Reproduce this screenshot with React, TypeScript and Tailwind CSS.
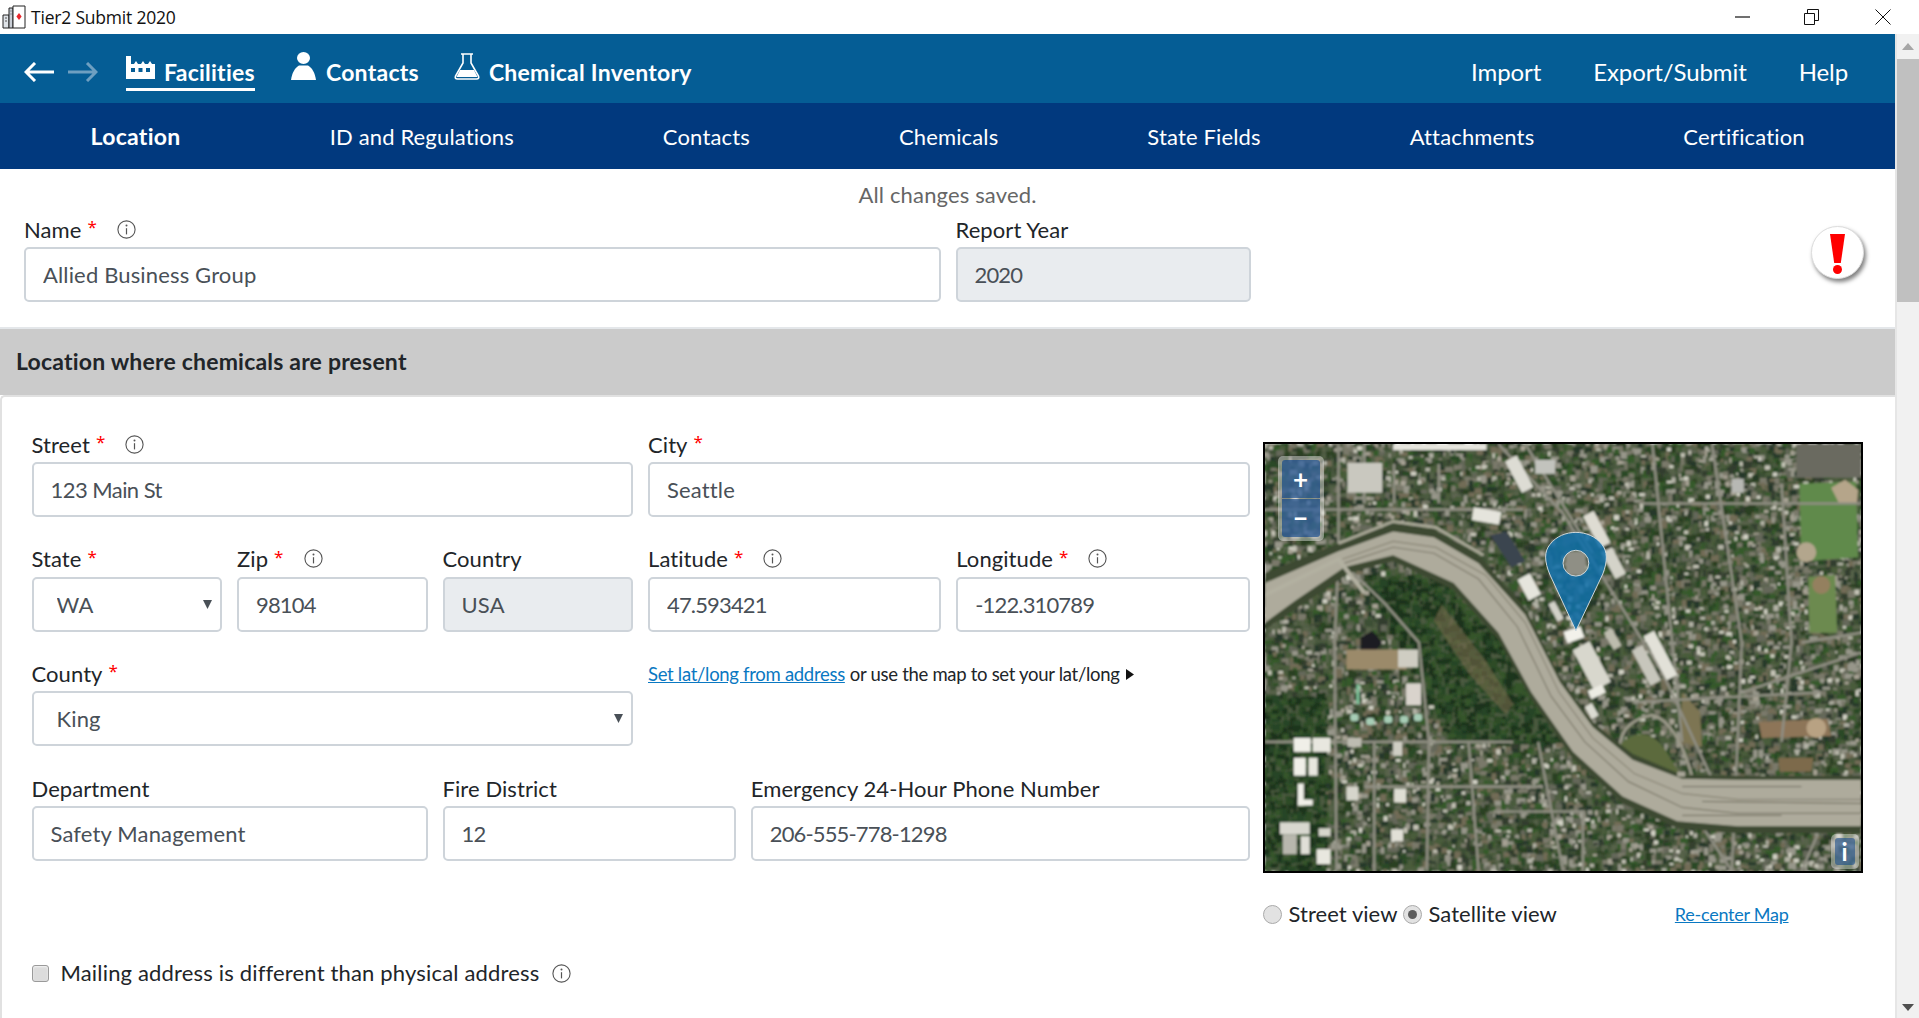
import type { ReactNode } from "react";

// tiny seeded random so the map looks the same on every render
function makeRandom(seed: number) {
  let s = seed;
  return () => {
    s = (s * 1664525 + 1013904223) % 4294967296;
    return s / 4294967296;
  };
}

type Lot = { x: number; y: number; w: number; h: number; c: string };

const rnd = makeRandom(42);
const hoodColors = ["#2c4a25", "#365a2c", "#28392a", "#65685a", "#7a796a", "#726c56", "#4a5c3a", "#97968a", "#333c2e", "#566249", "#3e5034", "#2b3f23"];
const forestColors = ["#1f361d", "#264427", "#1c321b", "#2d4c28", "#35552c"];
const roofColors = ["#c4c3b6", "#b3b2a6", "#d2d1c5", "#a7a294"];

const lots: Lot[] = [];
for (let y = -4; y < 430; y += 5) {
  for (let x = -4; x < 600; x += 5) {
    const inForestA = x - y * 0.55 > 20 && x - y * 0.9 < 60 && y > 130 && y < 300 && x > 100;
    const inForestB = x < 60 && y > 250;
    const pick = inForestA || inForestB ? forestColors : hoodColors;
    const c = pick[Math.floor(rnd() * pick.length)];
    lots.push({ x: x + rnd() * 5, y: y + rnd() * 5, w: 3 + rnd() * 6, h: 3 + rnd() * 6, c });
    if (!inForestA && !inForestB && rnd() < 0.1) {
      const roof = roofColors[Math.floor(rnd() * roofColors.length)];
      lots.push({ x: x + rnd() * 4, y: y + rnd() * 4, w: 2 + rnd() * 4, h: 2 + rnd() * 4, c: roof });
    }
  }
}

const roads = [
  "M74 0 L74 116 L70 200 L72 430",
  "M0 66 L260 66",
  "M74 116 L120 160 L155 200 L165 300 L163 430",
  "M235 0 L300 70 L400 230 L470 380",
  "M262 0 L330 110",
  "M450 0 L480 200 L470 430",
  "M380 60 L600 60",
  "M480 250 L600 210",
  "M0 300 L250 300",
  "M100 345 L280 345",
  "M230 370 L320 370 L320 430",
  "M520 40 L530 200 L520 300",
  "M370 260 L560 250",
  "M390 0 L420 300",
  "M275 300 L300 430",
  "M440 385 L470 430",
  "M560 385 L540 430",
  "M100 0 L100 60",
  "M130 20 L130 60",
  "M175 20 L175 60",
  "M110 300 L110 430",
  "M205 300 L215 430",
  "M540 200 L600 190",
];

const whites = [
  { x: 83, y: 19, w: 35, h: 30, r: 0, c: "#c9c8bf" },
  { x: 129, y: 0, w: 94, h: 6, r: 0, c: "#e6e5de" },
  { x: 238, y: 24, w: 36, h: 13, r: 62, c: "#dddcd4" },
  { x: 272, y: 16, w: 20, h: 14, r: 0, c: "#c2c3bd" },
  { x: 209, y: 66, w: 28, h: 13, r: 10, c: "#e5e4dc" },
  { x: 316, y: 80, w: 36, h: 12, r: 62, c: "#dedcd2" },
  { x: 336, y: 114, w: 30, h: 12, r: 62, c: "#d4d3c9" },
  { x: 254, y: 137, w: 24, h: 14, r: 62, c: "#e6e5dd" },
  { x: 283, y: 165, w: 20, h: 7, r: 62, c: "#d2d1c8" },
  { x: 303, y: 108, w: 20, h: 24, r: 0, c: "#8f8f85" },
  { x: 302, y: 186, w: 18, h: 12, r: -20, c: "#f2f1ea" },
  { x: 306, y: 214, w: 46, h: 19, r: 62, c: "#d8d7cd" },
  { x: 326, y: 245, w: 16, h: 9, r: -25, c: "#ecebe3" },
  { x: 373, y: 207, w: 50, h: 12, r: 62, c: "#e2e1d8" },
  { x: 364, y: 217, w: 40, h: 12, r: 62, c: "#c7c6bc" },
  { x: 340, y: 192, w: 20, h: 9, r: 60, c: "#bdbcae" },
  { x: 322, y: 265, w: 14, h: 8, r: 60, c: "#dcdbd2" },
  { x: 82, y: 207, w: 60, h: 20, r: 0, c: "#9b8a6a" },
  { x: 134, y: 207, w: 20, h: 18, r: 0, c: "#cfcdc2" },
  { x: 142, y: 241, w: 15, h: 22, r: 0, c: "#d9d3cc" },
  { x: 29, y: 296, w: 17, h: 14, r: 0, c: "#f0efe8" },
  { x: 48, y: 296, w: 18, h: 14, r: 0, c: "#e8e7df" },
  { x: 29, y: 316, w: 12, h: 18, r: 0, c: "#f0efe8" },
  { x: 44, y: 316, w: 9, h: 18, r: 0, c: "#e8e7df" },
  { x: 33, y: 342, w: 6, h: 22, r: 0, c: "#f0efe8" },
  { x: 33, y: 358, w: 15, h: 6, r: 0, c: "#f0efe8" },
  { x: 15, y: 381, w: 30, h: 12, r: 0, c: "#d8d7cf" },
  { x: 18, y: 393, w: 14, h: 20, r: 0, c: "#b8b7ad" },
  { x: 36, y: 395, w: 9, h: 18, r: 0, c: "#e0dfd7" },
  { x: 52, y: 408, w: 14, h: 15, r: 0, c: "#e8e7df" },
  { x: 54, y: 387, w: 12, h: 8, r: 0, c: "#d7d6cc" },
  { x: 83, y: 296, w: 14, h: 9, r: 0, c: "#bdbcb1" },
  { x: 129, y: 300, w: 9, h: 14, r: 0, c: "#cfcec4" },
  { x: 82, y: 345, w: 12, h: 14, r: 0, c: "#d6d5cb" },
  { x: 130, y: 347, w: 12, h: 14, r: 0, c: "#dfded4" },
  { x: 127, y: 388, w: 12, h: 12, r: 0, c: "#e1e0d7" },
  { x: 470, y: 35, w: 12, h: 14, r: 0, c: "#b7b8b4" },
  { x: 415, y: 330, w: 8, h: 5, r: 0, c: "#a8a598" },
];

const mints = [
  [86, 272],
  [102, 276],
  [120, 274],
  [136, 274],
  [150, 272],
];

function MapArt() {
  return (
    <svg viewBox="0 0 600 430" className="block h-full w-full" preserveAspectRatio="none">
      <defs>
        <filter id="soft" x="-2%" y="-2%" width="104%" height="104%">
          <feGaussianBlur stdDeviation="0.9" />
        </filter>
      </defs>
      <g filter="url(#soft)">
        <rect width="600" height="430" fill="#4b5a3f" />
        {lots.map((l, i) => (
          <rect key={i} x={l.x} y={l.y} width={l.w} height={l.h} fill={l.c} />
        ))}
        {/* parks and fields */}
        <rect x="535" y="0" width="65" height="34" fill="#6b6b60" />
        <path d="M538 40 L595 38 L597 114 L540 118 Z" fill="#618a4c" />
        <path d="M570 44 L584 36 L597 46 L596 60 L578 60 Z" fill="#b5a58a" />
        <circle cx="545" cy="109" r="10" fill="#b3a68d" />
        <path d="M547 134 L574 132 L576 190 L548 190 Z" fill="#6c8a50" />
        <circle cx="560" cy="142" r="9" fill="#94805e" />
        <path d="M497 280 L566 277 L570 294 L500 296 Z" fill="#8d7558" />
        <circle cx="555" cy="286" r="10" fill="#b8a283" />
        <path d="M517 316 L552 316 L550 330 L518 330 Z" fill="#7d6a4c" />
        <path d="M420 250 L438 270 L440 305 L418 300 Z" fill="#7d7452" />
        <path d="M178 162 L222 218 L250 262 L242 272 L206 232 L170 178 Z" fill="#7d6f50" opacity="0.55" />
        <path d="M350 310 Q385 270 410 320 L420 335 L370 320 Z" fill="#5c6b3c" />

        {/* streets */}
        {roads.map((d) => (
          <path key={d} d={d} fill="none" stroke="#8f8e82" strokeWidth="2.6" />
        ))}
        <path d="M358 323 Q350 280 390 273 Q415 280 430 335" fill="none" stroke="#9a9888" strokeWidth="3" />

        {/* highway */}
        <path d="M0 130 L74 100 L129 80 L170 86 L215 112 L262 165 L297 235 L330 280 L370 312 L420 333 L476 334 L600 334 L600 392 L476 392 L415 387 L360 362 L310 317 L268 257 L235 197 L190 147 L129 118 L85 130 L30 167 L0 187 Z" fill="#3c4a30" />
        <path d="M74 100 L129 78 L172 84 L220 112" fill="none" stroke="#a9a797" strokeWidth="3" />
        <path d="M0 140 L74 108 L129 88 L170 94 L215 120 L262 172 L297 240 L330 285 L370 318 L420 337 L476 338 L600 338 L600 385 L476 385 L415 380 L360 355 L310 310 L268 250 L235 190 L190 140 L129 112 L80 124 L30 158 L0 180 Z" fill="#aeab9c" />
        <path d="M78 116 L129 98 L172 104 L222 132 L262 180 L296 250 L330 296 L372 332 L420 352 L476 358 L600 358" fill="none" stroke="#8f8b7b" strokeWidth="1.4" />
        <path d="M80 120 L129 104 L170 110 L215 136 L254 184 L288 254 L322 300 L366 340 L420 366 L476 372 L600 372" fill="none" stroke="#7e7a6b" strokeWidth="1.2" />
        <path d="M420 345 L540 345 M440 360 L600 362 M420 374 L520 374" fill="none" stroke="#6b6859" strokeWidth="1" />
        <path d="M0 152 L74 116 L100 150" fill="none" stroke="#b2b0a1" strokeWidth="4" />

        {/* dark roof beside the highway */}
        <path d="M227 92 L243 88 L262 118 L248 124 Z" fill="#3b4450" />
        <path d="M96 195 L108 188 L118 200 L112 208 L96 208 Z" fill="#1c1d20" />

        {whites.map((b) => (
          <rect
            key={`${b.x}-${b.y}`}
            x={b.x}
            y={b.y}
            width={b.w}
            height={b.h}
            fill={b.c}
            transform={b.r ? `rotate(${b.r} ${b.x + b.w / 2} ${b.y + b.h / 2})` : undefined}
          />
        ))}
        {mints.map(([x, y]) => (
          <rect key={x} x={x} y={y} width="8" height="7" rx="2" fill="#a7cdb6" />
        ))}
        <rect x="92" y="242" width="3" height="20" fill="#7ec39a" />
      </g>

      {/* location pin */}
      <path
        fillRule="evenodd"
        d="M313 188 L287 132 C281 118 281 108 287 101 C293 93 303 89 313 89 C323 89 333 93 339 101 C345 108 345 118 340 131 Z M313 107 A13 13 0 1 0 313 133 A13 13 0 1 0 313 107 Z"
        fill="#0f70aa"
        fillOpacity="0.85"
        stroke="#cfd8dc"
        strokeWidth="1"
      />
    </svg>
  );
}

function InfoIcon({ size = 19 }: { size?: number }) {
  return (
    <svg width={size} height={size} viewBox="0 0 19 19" fill="none" className="shrink-0">
      <circle cx="9.5" cy="9.5" r="8.6" stroke="#555" strokeWidth="1.1" />
      <circle cx="9.5" cy="5.4" r="1" fill="#555" />
      <path d="M9.5 8.2v6.2" stroke="#555" strokeWidth="1.2" />
    </svg>
  );
}

function Caret() {
  return (
    <svg width="9" height="9" viewBox="0 0 9 9" className="pointer-events-none absolute top-[23px] right-[10px]">
      <path d="M0 0h9L4.5 9z" fill="#495057" />
    </svg>
  );
}

function Label(props: { text: string; required?: boolean; info?: boolean }) {
  const { text, required, info } = props;
  return (
    <div className="flex h-[30px] items-center pb-[5px] text-[22px] leading-none tracking-[0.08px] text-[#212529]">
      <span>{text}</span>
      {required && <span className="mb-[6px] ml-[6px] font-['Noto_Sans',sans-serif] text-[17px] leading-none text-[#ff0000]">*</span>}
      {info && (
        <span className="mb-[1px] ml-[20px] flex">
          <InfoIcon />
        </span>
      )}
    </div>
  );
}

const inputClass =
  "block h-[55px] w-full rounded-[5px] border-2 border-[#ced4da] px-[17px] text-[22px] text-[#495057] outline-none";

function Field(props: {
  span: string;
  label: string;
  value: string;
  required?: boolean;
  info?: boolean;
  disabled?: boolean;
  select?: boolean;
}) {
  const { span, label, value, required, info, disabled, select } = props;
  // digits run narrower in the original face
  let spacing = "tracking-[0.15px]";
  if (/^[-\d.]+$/.test(value)) spacing = "tracking-[-0.85px]";
  else if (/^\d/.test(value)) spacing = "tracking-[-0.55px]";
  return (
    <div className={span}>
      <Label text={label} required={required} info={info} />
      {select ? (
        <div className="relative">
          <select defaultValue={value} className={`${inputClass} ${spacing} appearance-none bg-white pl-[23px]`}>
            <option>{value}</option>
          </select>
          <Caret />
        </div>
      ) : (
        <input
          readOnly
          defaultValue={value}
          className={`${inputClass} ${spacing} ${disabled ? "bg-[#e9ecef]" : "bg-white"}`}
        />
      )}
    </div>
  );
}

function TopLink({ icon, text, active, gap = "gap-[9px]" }: { icon: ReactNode; text: string; active?: boolean; gap?: string }) {
  return (
    <div className={`flex h-[39px] items-center ${gap} ${active ? "border-b-[3px] border-white" : "border-b-[3px] border-transparent"}`}>
      {icon}
      <span className="pt-[5px] text-[23px] leading-none font-bold tracking-[0.25px] text-white">{text}</span>
    </div>
  );
}

const subNav = ["Location", "ID and Regulations", "Contacts", "Chemicals", "State Fields", "Attachments", "Certification"];

export default function App() {
  return (
    <div className="flex h-[1018px] w-[1919px] flex-col overflow-hidden bg-white font-['Lato','Noto_Sans',sans-serif]">
      {/* window title bar */}
      <div className="flex h-[34px] shrink-0 items-center bg-white">
        <svg width="24" height="24" viewBox="0 0 24 24" className="ml-[2px]">
          <path d="M1 10h6v13H1z" fill="#dfe3e8" stroke="#222" />
          <path d="M7 3h4v20H7z" fill="#c9ced6" stroke="#222" />
          <path d="M11 1h12v22H11z" fill="#fff" stroke="#222" />
          <path d="M17 8l2.6 3.5L17 15l-2.6-3.5z" fill="#e8262c" />
          <path d="M3 13h2M3 16h2M8.5 6h1M8.5 9h1" stroke="#555" />
        </svg>
        <span className="ml-[5px] font-['Open_Sans',sans-serif] text-[17.5px] tracking-[-0.2px] text-[#111]">Tier2 Submit 2020</span>
        <div className="ml-auto flex items-center">
          <svg width="16" height="2" viewBox="0 0 16 2" className="mr-[53px]">
            <path d="M0 1h15" stroke="#111" strokeWidth="1.2" />
          </svg>
          <svg width="15" height="16" viewBox="0 0 15 16" fill="none" className="mr-[56px]">
            <path d="M.5 4.5h10v11H.5zM3.5 4.5v-4h11v11h-4" stroke="#111" />
          </svg>
          <svg width="16" height="16" viewBox="0 0 16 16" fill="none" className="mr-[28px]">
            <path d="M.5.5l15 15M15.500.5l-15 15" stroke="#111" />
          </svg>
        </div>
      </div>

      <div className="flex min-h-0 flex-1">
        <div className="flex w-[1895px] shrink-0 flex-col">
          {/* top navigation */}
          <div className="flex h-[69px] shrink-0 items-center bg-[#055d95] pt-[6px] pl-[24px] text-white">
            <svg width="30" height="20" viewBox="0 0 30 20" fill="none" stroke="#fff" strokeWidth="3">
              <path d="M30 10H3M11 1L2 10l9 9" />
            </svg>
            <svg width="30" height="20" viewBox="0 0 30 20" fill="none" stroke="#6e9fc1" strokeWidth="3" className="ml-[14px]">
              <path d="M0 10h27M19 1l9 9-9 9" />
            </svg>
            <div className="ml-[28px]">
              <TopLink
                active
                text="Facilities"
                icon={
                  <svg width="29" height="23" viewBox="0 0 29 23" className="mb-[5px]">
                    <path
                      fillRule="evenodd"
                      d="M0 23V0h5v8h3l2-3 2 3h3l2-3 2 3h3l2-3 2 3h3v15z M5 12h4v4H5z M12.500 12h4v4h-4z M20 12h4v4h-4z"
                      fill="#fff"
                    />
                  </svg>
                }
              />
            </div>
            <div className="ml-[36px]">
              <TopLink
                text="Contacts"
                gap="gap-[10px]"
                icon={
                  <svg width="25" height="28" viewBox="0 0 25 28" className="mb-[9px]" fill="#fff">
                    <ellipse cx="12.500" cy="6" rx="6.500" ry="6" />
                    <path d="M0 28C1 21 4 15.500 8 13.500h9c4 2 7 7.500 8 14.500z" />
                  </svg>
                }
              />
            </div>
            <div className="ml-[35px]">
              <TopLink
                text="Chemical Inventory"
                icon={
                  <svg width="26" height="27" viewBox="0 0 26 27" className="mb-[8px]" fill="none" stroke="#fff" strokeWidth="1.6">
                    <path d="M7 1h12M9 1v9L1.500 23q-1 3 2 3h19q3 0 2-3L17 10V1" />
                    <path d="M6 17h14l3.500 7h-21z" fill="#fff" stroke="none" />
                  </svg>
                }
              />
            </div>
            <div className="mr-[47px] ml-auto flex gap-[52px] text-[24px] leading-none tracking-[-0.1px]">
              <span>Import</span>
              <span>Export/Submit</span>
              <span>Help</span>
            </div>
          </div>

          {/* sub navigation */}
          <div className="flex h-[66px] shrink-0 items-center gap-[149px] bg-[#01397e] pt-[1px] pl-[90.5px] text-[22px] leading-none tracking-[0.15px] text-white">
            {subNav.map((item, i) => (
              <span key={item} className={i === 0 ? "text-[23px] font-bold tracking-[0.3px]" : ""}>
                {item}
              </span>
            ))}
          </div>

          {/* facility name */}
          <div className="relative shrink-0 pt-[11px] pb-[25px]">
            <div className="text-center text-[22px] leading-[30px] tracking-[0.15px] text-[#666]">All changes saved.</div>
            <div className="mt-[7px] grid w-[1251px] grid-cols-12 gap-x-[15px] pl-[24px]">
              <Field span="col-span-9" label="Name" value="Allied Business Group" required info />
              <Field span="col-span-3" label="Report Year" value="2020" disabled />
            </div>
            {/* warning badge */}
            <div className="absolute top-[57px] right-[31px] flex h-[53px] w-[53px] flex-col items-center rounded-full border border-[#ddd] bg-white pt-[7px] shadow-[2px_3px_4px_rgba(0,0,0,0.5)]">
              <div className="h-[29px] w-[15px] bg-[#ff0000] [clip-path:polygon(0_0,100%_0,72%_100%,28%_100%)]" />
              <div className="mt-[2px] h-[9px] w-[9px] rounded-full bg-[#ff0000]" />
            </div>
          </div>

          {/* section heading */}
          <div className="flex h-[68px] shrink-0 items-center border-t-2 border-[#e4e7ea] bg-[#cbcbcb] pb-[1px] pl-[16px] text-[23px] font-bold tracking-[0.2px] text-[#212529]">
            Location where chemicals are present
          </div>

          {/* section body */}
          <div className="min-h-0 flex-1 rounded-tl-[5px] border-t-2 border-l-2 border-[#e1e1e1] pt-[35px] pl-[29.5px]">
            <div className="flex">
              <div className="w-[1218px] shrink-0">
                <div className="grid grid-cols-12 gap-x-[15px] gap-y-[29.7px]">
                  <Field span="col-span-6" label="Street" value="123 Main St" required info />
                  <Field span="col-span-6" label="City" value="Seattle" required />
                  <Field span="col-span-2" label="State" value="WA" required select />
                  <Field span="col-span-2" label="Zip" value="98104" required info />
                  <Field span="col-span-2" label="Country" value="USA" disabled />
                  <Field span="col-span-3" label="Latitude" value="47.593421" required info />
                  <Field span="col-span-3" label="Longitude" value="-122.310789" required info />
                  <Field span="col-span-6" label="County" value="King" required select />
                  <div className="col-span-6 flex h-[26px] items-center text-[18.5px] leading-none tracking-[-0.3px] text-[#212529]">
                    <a href="#" className="text-[#0a78c2] underline">
                      Set lat/long from address
                    </a>
                    <span className="ml-[5px]">or use the map to set your lat/long</span>
                    <svg width="8" height="11" viewBox="0 0 8 11" className="ml-[6px]">
                      <path d="M0 0l8 5.500L0 11z" fill="#111" />
                    </svg>
                  </div>
                  <Field span="col-span-4" label="Department" value="Safety Management" />
                  <Field span="col-span-3" label="Fire District" value="12" />
                  <Field span="col-span-5" label="Emergency 24-Hour Phone Number" value="206-555-778-1298" />
                </div>
                <div className="mt-[101px] flex items-center">
                  <input type="checkbox" readOnly className="h-[17px] w-[17px] appearance-none rounded-[3px] border border-[#9a9a9a] bg-[#dcdcdc] shadow-[inset_0_1px_2px_rgba(255,255,255,0.7)]" />
                  <span className="ml-[12px] text-[22px] leading-none tracking-[0.17px] text-[#212529]">Mailing address is different than physical address</span>
                  <span className="ml-[13px] flex">
                    <InfoIcon />
                  </span>
                </div>
              </div>

              <div className="mt-[10px] ml-[13px] w-[600px] shrink-0">
                <div className="relative h-[431px] w-[600px] border-2 border-black">
                  <MapArt />
                  {/* zoom controls */}
                  <div className="absolute top-[12px] left-[13px] flex flex-col gap-[1px] rounded-[5px] bg-white/40 p-[4px]">
                    <div className="flex h-[38px] w-[38px] items-center justify-center rounded-t-[3px] bg-[#003c88]/60 text-[26px] leading-none font-bold text-white">+</div>
                    <div className="flex h-[38px] w-[38px] items-center justify-center rounded-b-[3px] bg-[#003c88]/60 text-[26px] leading-none font-bold text-white">−</div>
                  </div>
                  <div className="absolute right-[2px] bottom-[2px] rounded-[5px] bg-white/40 p-[4px]">
                    <div className="flex h-[27px] w-[20px] items-center justify-center rounded-[3px] bg-[#003c88]/50 text-[24px] leading-none font-bold text-white">i</div>
                  </div>
                </div>
                <div className="mt-[30px] flex h-[22px] items-center text-[22px] leading-none tracking-[0.05px] text-[#212529]">
                  <span className="h-[19px] w-[19px] rounded-full border border-[#aaa] bg-[#e2e2e2]" />
                  <span className="ml-[7px]">Street view</span>
                  <span className="ml-[5px] flex h-[19px] w-[19px] items-center justify-center rounded-full border border-[#aaa] bg-[#e2e2e2]">
                    <span className="h-[9px] w-[9px] rounded-full bg-[#5c5c5c]" />
                  </span>
                  <span className="ml-[7px]">Satellite view</span>
                  <a href="#" className="ml-[118px] text-[18px] tracking-[-0.25px] text-[#0a78c2] underline">
                    Re-center Map
                  </a>
                </div>
              </div>
            </div>
          </div>
        </div>

        {/* scrollbar */}
        <div className="flex w-[24px] shrink-0 flex-col items-center border-l-2 border-[#e6e6e6] bg-[#f1f1f1] pt-[9px] pb-[7px]">
          <svg width="12" height="7" viewBox="0 0 12 7">
            <path d="M6 0l6 7H0z" fill="#a6a6a6" />
          </svg>
          <div className="mt-[9px] h-[243px] w-full bg-[#c0c0c0]" />
          <svg width="12" height="7" viewBox="0 0 12 7" className="mt-auto">
            <path d="M0 0h12L6 7z" fill="#505050" />
          </svg>
        </div>
      </div>
    </div>
  );
}
